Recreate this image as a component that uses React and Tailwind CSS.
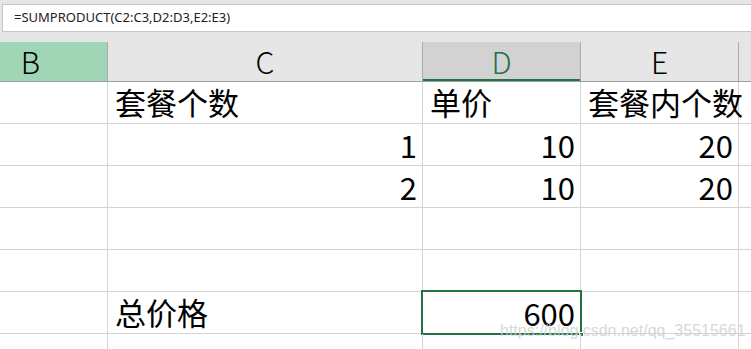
import React from "react";

const font = { fontFamily: '"Noto Sans CJK SC", "Noto Sans", sans-serif' };

const rows = [
  ["", "套餐个数", "单价", "套餐内个数"],
  ["", "1", "10", "20"],
  ["", "2", "10", "20"],
  ["", "", "", ""],
  ["", "", "", ""],
  ["", "总价格", "600", ""],
  ["", "", "", ""],
];

const isNum = (v) => /^\d+$/.test(v);

function Cell({ value, width, selected }) {
  const num = isNum(value);
  return (
    <div
      className={`relative h-full shrink-0 border-r border-[#d4d4d4] flex items-end ${
        num ? "justify-end pr-[5px] pb-[1px]" : "justify-start pl-[7px] pb-[2px]"
      } ${width}`}
    >
      <span className={num ? "text-[31px] leading-[38px] text-black" : "text-[31px] leading-[38px] text-black whitespace-nowrap"}>
        {value}
      </span>
      {selected && (
        <div className="pointer-events-none absolute left-[-2px] top-[-2px] right-[-2px] bottom-[-2px] border-2 border-[#217346]">
          <div className="absolute right-[-4px] bottom-[-4px] h-[5px] w-[5px] bg-[#217346] border border-white" />
        </div>
      )}
    </div>
  );
}

export default function App() {
  return (
    <div className="w-[751px] h-[349px] overflow-hidden bg-white relative" style={font}>
      {/* formula bar */}
      <div className="bg-[#e6e6e6] pt-[4px] pl-[2px] pb-[10px]">
        <div className="h-[28px] bg-white border border-[#c6c6c6] border-r-0 flex items-center pl-[11px]">
          <span className="text-[13px] text-[#222]" style={{ fontFamily: '"Noto Sans", sans-serif' }}>
            =SUMPRODUCT(C2:C3,D2:D3,E2:E3)
          </span>
        </div>
      </div>

      {/* column headers */}
      <div className="flex h-[40px] bg-[#e6e6e6] border-b border-[#9e9e9e] text-[30px] font-light">
        <div className="w-[108px] shrink-0 bg-[#a0d5b6] border-r border-[#ababab] flex items-center justify-center pr-[46px]">
          B
        </div>
        <div className="w-[315px] shrink-0 border-r border-[#ababab] flex items-center justify-center">C</div>
        <div className="w-[158px] shrink-0 bg-[#d2d2d2] border-r border-[#ababab] flex items-center justify-center text-[#217346] relative">
          D
          <div className="absolute left-0 right-0 bottom-0 h-[2px] bg-[#217346]" />
        </div>
        <div className="w-[158px] shrink-0 border-r border-[#ababab] flex items-center justify-center">E</div>
        <div className="flex-1" />
      </div>

      {/* grid */}
      {rows.map((r, i) => (
        <div key={i} className="flex h-[42px] border-b border-[#d4d4d4]">
          <Cell value={r[0]} width="w-[108px]" />
          <Cell value={r[1]} width="w-[315px]" />
          <Cell value={r[2]} width="w-[158px]" selected={i === 5} />
          <Cell value={r[3]} width="w-[158px]" />
          <div className="flex-1" />
        </div>
      ))}

      <div
        className="absolute left-[500px] top-[322px] text-[16px] leading-[18px] text-[#cfcfcf] opacity-80"
        style={{ fontFamily: '"Liberation Sans", sans-serif' }}
      >
        https://blog.csdn.net/qq_35515661
      </div>
    </div>
  );
}
